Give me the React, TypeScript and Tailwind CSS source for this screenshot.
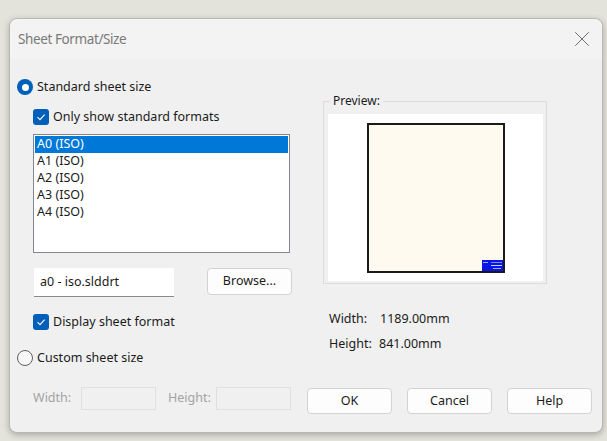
import { X } from "lucide-react";

const font = { fontFamily: '"Noto Sans", "Open Sans", sans-serif' };

const Radio = ({ checked }: { checked: boolean }) =>
  checked ? (
    <span className="flex h-[16px] w-[16px] items-center justify-center rounded-full bg-[#005fb8]">
      <span className="h-[7px] w-[7px] rounded-full bg-white" />
    </span>
  ) : (
    <span className="h-[16px] w-[16px] rounded-full border border-[#5f5f5f] bg-[#f7f7f7]" />
  );

const Check = () => (
  <span className="flex h-[16px] w-[16px] items-center justify-center rounded-[3px] bg-[#005fb8]">
    <svg width="10" height="10" viewBox="0 0 10 10" fill="none">
      <path d="M1.5 5.2 L4 7.6 L8.6 2.6" stroke="white" strokeWidth="1.1" />
    </svg>
  </span>
);

const Button = ({ label }: { label: string }) => (
  <button className="flex h-[26px] w-[85px] items-center justify-center rounded-[4px] border border-[#d3d3d3] bg-[#fdfdfd] text-[12.5px] text-[#1b1b1b]">
    {label}
  </button>
);

const formats = ["A0 (ISO)", "A1 (ISO)", "A2 (ISO)", "A3 (ISO)", "A4 (ISO)"];

export default function App() {
  return (
    <div
      className="h-[441px] w-[607px] bg-[#e3e3db] pb-[8px] pl-[9px] pr-[4px] pt-[18px]"
      style={font}
    >
      <div className="flex h-[415px] w-[594px] flex-col rounded-[8px] border border-[#b9b9b4] bg-[#f0f0f0] shadow-[0_2px_6px_rgba(0,0,0,0.25)]">
        {/* Title bar */}
        <div className="flex h-[40px] items-center justify-between rounded-t-[8px] bg-[#f3f3f3] pl-[8px] pr-[7px]">
          <span className="text-[13.5px] tracking-[-0.4px] text-[#7a7a7a]">Sheet Format/Size</span>
          <X size={26} strokeWidth={1} absoluteStrokeWidth color="#707070" />
        </div>

        {/* Body */}
        <div className="flex flex-col pl-[7px] text-[12.5px] text-[#1b1b1b]">
          <div className="flex">
            {/* Left column */}
            <div className="flex w-[306px] flex-col">
              <div className="mt-[18px] flex h-[20px] items-center gap-[4px]">
                <Radio checked />
                <span>Standard sheet size</span>
              </div>

              <div className="mt-[10px] flex h-[20px] items-center gap-[4px] pl-[16px]">
                <Check />
                <span>Only show standard formats</span>
              </div>

              <div className="ml-[16px] mt-[7px] h-[119px] w-[257px] border border-[#828790] bg-white p-[1px]">
                {formats.map((f, i) => (
                  <div
                    key={f}
                    className={`flex h-[17px] items-center pl-[2px] ${
                      i === 0 ? "bg-[#0078d7] text-white" : "text-[#1b1b1b]"
                    }`}
                  >
                    {f}
                  </div>
                ))}
              </div>

              <div className="mt-[15px] flex items-start pl-[17px]">
                <div className="flex h-[29px] w-[140px] items-center border-b border-[#8a8a8a] bg-white pl-[6px]">
                  a0 - iso.slddrt
                </div>
                <div className="ml-[33px]">
                  <button className="flex h-[27px] w-[85px] items-center justify-center rounded-[4px] border border-[#d3d3d3] bg-[#fdfdfd] text-[12.5px] text-[#1b1b1b]">
                    Browse...
                  </button>
                </div>
              </div>

              <div className="mt-[15px] flex h-[20px] items-center gap-[4px] pl-[16px]">
                <Check />
                <span>Display sheet format</span>
              </div>

              <div className="mt-[16px] flex h-[20px] items-center gap-[4px]">
                <Radio checked={false} />
                <span>Custom sheet size</span>
              </div>
            </div>

            {/* Right column */}
            <div className="flex flex-col">
              <div className="relative mt-[42px] h-[183px] w-[224px] border border-[#dcdcdc] pb-[2px] pl-[4px] pr-[3px] pt-[12px]">
                <span className="absolute -top-[10px] left-[6px] bg-[#f0f0f0] px-[3px] text-[12px] text-[#1b1b1b]">
                  Preview:
                </span>
                <div className="flex h-full w-full items-center justify-center bg-white">
                  <div className="relative h-[150px] w-[138px] border-2 border-[#1a1a1a] bg-[#fffaf0]">
                    <svg
                      className="absolute bottom-0 right-0"
                      width="21"
                      height="11"
                      viewBox="0 0 21 11"
                    >
                      <rect width="21" height="11" fill="#0a14e6" />
                      <rect x="1" y="2" width="5" height="1" fill="#9aa6ff" />
                      <rect x="9" y="2" width="11" height="1" fill="#7d8bff" />
                      <rect x="9" y="5" width="11" height="1" fill="#c9d0ff" />
                      <rect x="11" y="8" width="8" height="1" fill="#9aa6ff" />
                    </svg>
                  </div>
                </div>
              </div>

              <div className="mt-[25px] flex h-[20px] items-center pl-[6px]">
                <span className="w-[51px]">Width:</span>
                <span>1189.00mm</span>
              </div>
              <div className="mt-[5px] flex h-[20px] items-center pl-[6px]">
                <span className="w-[50px]">Height:</span>
                <span>841.00mm</span>
              </div>
            </div>
          </div>

          {/* Bottom row */}
          <div className="mt-[19px] flex items-start pl-[16px]">
            <div className="flex items-center text-[#a3a3a3]">
              <span className="w-[48px]">Width:</span>
              <span className="h-[23px] w-[75px] border border-[#e0e0e0] bg-[#f0f0f0]" />
              <span className="ml-[12px] w-[48px]">Height:</span>
              <span className="h-[23px] w-[75px] border border-[#e0e0e0] bg-[#f0f0f0]" />
            </div>
            <div className="ml-[16px] mt-[1px] flex gap-[15px]">
              <Button label="OK" />
              <Button label="Cancel" />
              <Button label="Help" />
            </div>
          </div>
        </div>
      </div>
    </div>
  );
}
